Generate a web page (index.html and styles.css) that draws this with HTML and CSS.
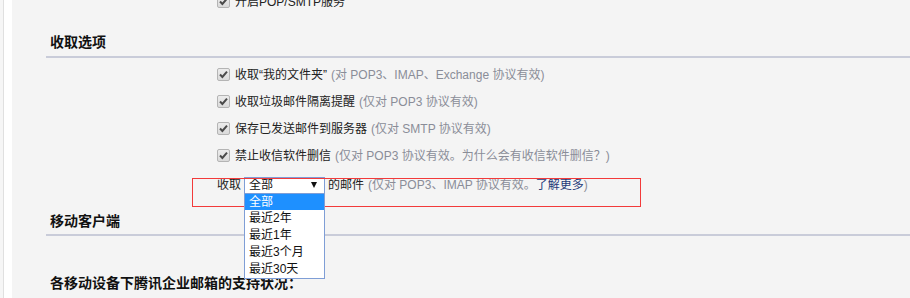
FILE: index.html
```html
<!DOCTYPE html>
<html lang="zh-CN">
<head>
<meta charset="utf-8">
<title>收取选项</title>
<link rel="stylesheet" href="styles.css">
</head>
<body>
<div class="frame">
  <div class="gutter"></div>
  <div class="strip"></div>
  <div class="main">
    <div class="row opt first">
      <span class="cb"><svg viewBox="0 0 13 13" width="13" height="13"><path d="M3 6.5 L5.4 9 L10 3.6" fill="none" stroke="#4a4a4a" stroke-width="2"/></svg></span>
      <span class="label">开启POP/SMTP服务</span>
    </div>

    <h2 class="sec-title recv">收取选项</h2>

    <div class="opts">
      <div class="row opt">
        <span class="cb"><svg viewBox="0 0 13 13" width="13" height="13"><path d="M3 6.5 L5.4 9 L10 3.6" fill="none" stroke="#4a4a4a" stroke-width="2"/></svg></span>
        <span class="label">收取“我的文件夹”</span><span class="note">(对 POP3、IMAP、Exchange 协议有效)</span>
      </div>
      <div class="row opt">
        <span class="cb"><svg viewBox="0 0 13 13" width="13" height="13"><path d="M3 6.5 L5.4 9 L10 3.6" fill="none" stroke="#4a4a4a" stroke-width="2"/></svg></span>
        <span class="label">收取垃圾邮件隔离提醒</span><span class="note">(仅对 POP3 协议有效)</span>
      </div>
      <div class="row opt">
        <span class="cb"><svg viewBox="0 0 13 13" width="13" height="13"><path d="M3 6.5 L5.4 9 L10 3.6" fill="none" stroke="#4a4a4a" stroke-width="2"/></svg></span>
        <span class="label">保存已发送邮件到服务器</span><span class="note">(仅对 SMTP 协议有效)</span>
      </div>
      <div class="row opt">
        <span class="cb"><svg viewBox="0 0 13 13" width="13" height="13"><path d="M3 6.5 L5.4 9 L10 3.6" fill="none" stroke="#4a4a4a" stroke-width="2"/></svg></span>
        <span class="label">禁止收信软件删信</span><span class="note">(仅对 POP3 协议有效。为什么会有收信软件删信？)</span>
      </div>
      <div class="row select-row">
        <span class="label">收取</span>
        <div class="select">
          <span class="sel-text">全部</span>
          <span class="arrow"></span>
          <ul class="list">
            <li class="active">全部</li>
            <li>最近2年</li>
            <li>最近1年</li>
            <li>最近3个月</li>
            <li>最近30天</li>
          </ul>
        </div>
        <span class="label after">的邮件</span><span class="note">(仅对 POP3、IMAP 协议有效。<a class="more">了解更多</a>)</span>
        <div class="mark"></div>
      </div>
    </div>

    <h2 class="sec-title mobile">移动客户端</h2>
    <h3 class="sub">各移动设备下腾讯企业邮箱的支持状况：</h3>
  </div>
</div>
</body>
</html>
```

FILE: styles.css
```css
html, body {
  margin: 0;
  padding: 0;
  background: #f4f4f4;
  overflow: hidden;
}
body {
  font-family: "Liberation Sans", "Noto Sans CJK SC", sans-serif;
  font-size: 12px;
  color: #222;
}
.frame {
  display: flex;
  min-height: 298px;
}
.gutter {
  width: 3px;
  background: #f6f6f6;
  border-right: 1px solid #e0e0e0;
}
.strip {
  width: 8px;
  background: #fff;
}
.main {
  flex: 1;
  padding-left: 34px;
  margin-top: -12px;
}
.row {
  display: flex;
  align-items: center;
  height: 27px;
  padding-left: 171px;
  white-space: nowrap;
}
.cb {
  width: 13px;
  height: 13px;
  box-sizing: border-box;
  border: 1px solid #b4b4b4;
  border-radius: 2px;
  background: linear-gradient(#ececec, #dadada);
  margin-right: 5px;
  display: flex;
  align-items: center;
  justify-content: center;
  overflow: hidden;
}
.cb svg {
  display: block;
  flex: none;
}
.label {
  line-height: 16px;
  color: #222;
}
.note {
  line-height: 16px;
  color: #8a8d98;
  margin-left: 4px;
}
.more {
  color: #1f3a78;
}
.sec-title {
  margin: 0;
  font-size: 14px;
  font-weight: bold;
  line-height: 20px;
  color: #111;
  padding-left: 4px;
  border-bottom: 2px solid #c9ccd9;
}
.sec-title.recv {
  margin-top: 17px;
  padding-bottom: 4px;
}
.opts {
  margin-top: 3px;
}
.select-row {
  position: relative;
  height: 32px;
}
.select {
  position: relative;
  width: 81px;
  height: 17px;
  box-sizing: border-box;
  border: 1px solid #7f9ed6;
  background: #fff;
  margin: 0 3px 0 3px;
  display: flex;
  align-items: center;
  padding-left: 4px;
}
.sel-text {
  line-height: 15px;
  color: #111;
}
.arrow {
  position: absolute;
  right: 7px;
  top: 4px;
  width: 0;
  height: 0;
  border-left: 3px solid transparent;
  border-right: 3px solid transparent;
  border-top: 6px solid #111;
}
.list {
  position: absolute;
  left: -1px;
  top: 15px;
  width: 81px;
  box-sizing: border-box;
  margin: 0;
  padding: 0;
  list-style: none;
  background: #fff;
  border: 1px solid #7f9ed6;
  z-index: 5;
}
.list li {
  height: 17px;
  line-height: 17px;
  padding-left: 4px;
  color: #111;
}
.list li.active {
  background: #1e90ff;
  color: #fff;
  height: 16px;
  line-height: 16px;
}
.after {
  margin-left: 0;
}
.mark {
  position: absolute;
  left: 146px;
  top: 9px;
  width: 449px;
  height: 29px;
  box-sizing: border-box;
  border: 1px solid #f23a3a;
  z-index: 4;
}
.sec-title.mobile {
  margin-top: 10px;
  padding-bottom: 3px;
}
.sub {
  margin: 37px 0 0 0;
  padding-left: 4px;
  font-size: 14px;
  font-weight: bold;
  line-height: 20px;
  color: #111;
}
```
